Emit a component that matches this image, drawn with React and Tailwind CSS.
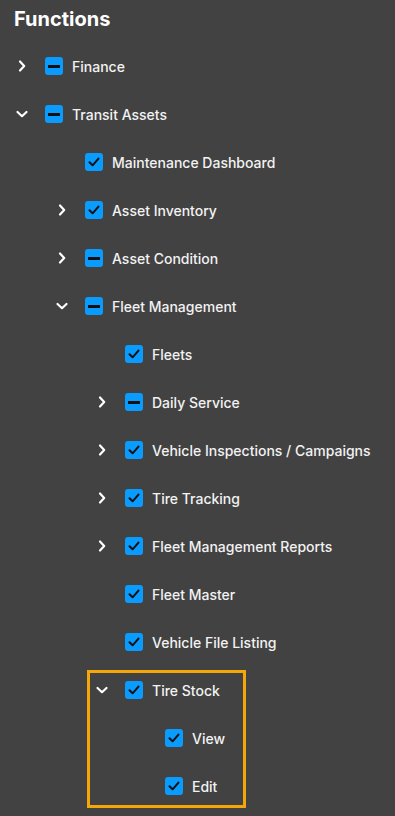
import React from "react";

const font = { fontFamily: '"Inter", "Noto Sans", sans-serif' };

// tree of functions
const tree = [
  { label: "Finance", state: "partial", open: false, level: 0, hasKids: true },
  { label: "Transit Assets", state: "partial", open: true, level: 0, hasKids: true },
  { label: "Maintenance Dashboard", state: "checked", level: 1 },
  { label: "Asset Inventory", state: "checked", level: 1, hasKids: true },
  { label: "Asset Condition", state: "partial", level: 1, hasKids: true },
  { label: "Fleet Management", state: "partial", open: true, level: 1, hasKids: true },
  { label: "Fleets", state: "checked", level: 2 },
  { label: "Daily Service", state: "partial", level: 2, hasKids: true },
  { label: "Vehicle Inspections / Campaigns", state: "checked", level: 2, hasKids: true },
  { label: "Tire Tracking", state: "checked", level: 2, hasKids: true },
  { label: "Fleet Management Reports", state: "checked", level: 2, hasKids: true },
  { label: "Fleet Master", state: "checked", level: 2 },
  { label: "Vehicle File Listing", state: "checked", level: 2 },
];

const highlighted = [
  { label: "Tire Stock", state: "checked", open: true, level: 2, hasKids: true },
  { label: "View", state: "checked", level: 3 },
  { label: "Edit", state: "checked", level: 3 },
];

function Chevron({ open }) {
  return open ? (
    <svg width="14" height="10" viewBox="0 0 14 10" fill="none">
      <path d="M2.5 3 L7 7.2 L11.5 3" stroke="#ffffff" strokeWidth="2.2" strokeLinecap="round" strokeLinejoin="round" />
    </svg>
  ) : (
    <svg width="10" height="14" viewBox="0 0 10 14" fill="none">
      <path d="M3 2.5 L7.2 7 L3 11.5" stroke="#ffffff" strokeWidth="2.2" strokeLinecap="round" strokeLinejoin="round" />
    </svg>
  );
}

function Box({ state }) {
  return (
    <div className="w-[18px] h-[18px] rounded-[3px] bg-[#0a9bff] flex items-center justify-center shrink-0">
      {state === "partial" ? (
        <div className="w-[12px] h-[3px] bg-[#111111]" />
      ) : (
        <svg width="14" height="14" viewBox="0 0 14 14" fill="none">
          <path d="M2.5 7.3 L5.6 10.3 L11.5 3.6" stroke="#111111" strokeWidth="2" strokeLinecap="round" strokeLinejoin="round" />
        </svg>
      )}
    </div>
  );
}

function Row({ item, offset = 12 }) {
  return (
    <div className="h-12 flex items-center" style={{ paddingLeft: offset + item.level * 40 }}>
      <div className="w-5 flex items-center justify-center shrink-0">
        {item.hasKids && <Chevron open={item.open} />}
      </div>
      <div className="ml-[13px]">
        <Box state={item.state} />
      </div>
      <span className="ml-[9px] text-[14px] font-medium text-[#f2f2f2] whitespace-nowrap">{item.label}</span>
    </div>
  );
}

export default function App() {
  return (
    <div className="min-h-screen bg-[#424242] pt-[5px]" style={font}>
      <h1 className="px-[14px] h-[28px] leading-[28px] text-[20px] font-bold text-white">Functions</h1>
      <div className="mt-[9px] flex flex-col">
        {tree.map((item) => (
          <Row key={item.label} item={item} />
        ))}
        <div className="mt-[4px] ml-[87px] w-[159px] border-[3px] border-[#f5a70a]">
          <div className="-mt-[7px] -mb-[5px] flex flex-col">
            {highlighted.map((item) => (
              <Row key={item.label} item={item} offset={-78} />
            ))}
          </div>
        </div>
      </div>
    </div>
  );
}
